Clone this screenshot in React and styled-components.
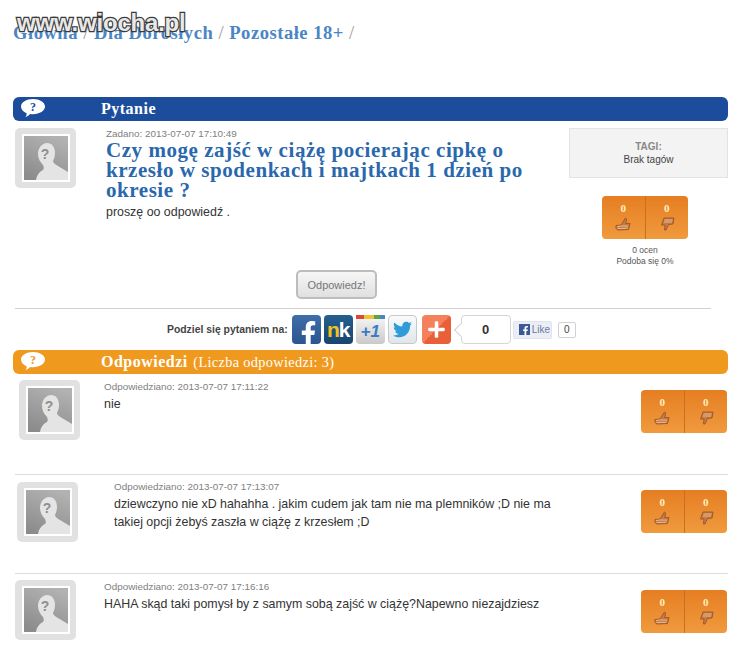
import React from "react";
import styled, { createGlobalStyle } from "styled-components";
import { FaFacebookF, FaTwitter, FaPlus } from "react-icons/fa";

const GlobalStyle = createGlobalStyle`
  html, body {
    margin: 0;
    padding: 0;
    background: #fff;
    font-family: "Liberation Sans", Arial, sans-serif;
  }
`;

function Bubble({ color }) {
  return (
    <BubbleSvg viewBox="0 0 26 20">
      <path d="M13 1c6.600 0 12 3.300 12 7.600s-5.400 7.600-12 7.600c-1 0-2 0-3-.2-1 1.200-2.600 2.600-4.600 3.200 1-1.200 1.300-2.600 1.200-4C3.300 14 1 11.500 1 8.600 1 4.300 6.400 1 13 1z" fill="#fff" />
      <text x="13" y="13" textAnchor="middle" fontSize="12" fontWeight="700" fontFamily="Liberation Serif, serif" fill={color}>?</text>
    </BubbleSvg>
  );
}

function Avatar() {
  return (
    <AvatarBox>
      <AvatarPic viewBox="0 0 44 44">
        <defs>
          <linearGradient id="avbg" x1="0.7" y1="0" x2="0.3" y2="1">
            <stop offset="0" stopColor="#b2b2b2" />
            <stop offset="1" stopColor="#8c8c8c" />
          </linearGradient>
        </defs>
        <rect width="44" height="44" fill="url(#avbg)" />
        <path d="M12 44c1-5 3-8 7-10 1-1 1-3 0-5-3-3-5-7-5-11 0-6 4-11 9-11s8 4 8 10c0 3-1 6-2 8 0 2 2 3 5 5l10 6v8z" fill="#e4e4e4" />
        <text x="21" y="23" textAnchor="middle" fontSize="14" fontWeight="700" fontFamily="Liberation Sans, sans-serif" fill="#8f8f8f">?</text>
      </AvatarPic>
    </AvatarBox>
  );
}

function ThumbUp() {
  return (
    <ThumbSvg viewBox="0 0 16 14">
      <path d="M1 8.500 6 8 10.500 1l1.200 1-1 4.500H15l-1.500 6-10 .5C1.500 13 .5 11 1 8.500z" fill="#c67a45" stroke="#8f4f25" strokeWidth="0.8" />
      <path d="M2 9.500l4-.5 7 .2M2.500 11.500l10-.2" stroke="#f2c9a0" strokeWidth="0.8" fill="none" />
    </ThumbSvg>
  );
}

function ThumbDown() {
  return (
    <ThumbSvg viewBox="0 0 16 14">
      <path d="M5 1h10l-1 6-4.500.5L7 13H5.500L6 8H2.500z" fill="#c67a45" stroke="#8f4f25" strokeWidth="0.8" />
      <path d="M5.500 3h8M5 5h8" stroke="#f2c9a0" strokeWidth="0.8" fill="none" />
    </ThumbSvg>
  );
}

function Votes() {
  return (
    <VoteBox>
      <VoteCell>
        <VoteCount>0</VoteCount>
        <ThumbUp />
      </VoteCell>
      <VoteCell>
        <VoteCount>0</VoteCount>
        <ThumbDown />
      </VoteCell>
    </VoteBox>
  );
}

const answers = [
  {
    date: "2013-07-07 17:11:22",
    text: "nie",
    indent: 24,
    left: 6,
    avatarTop: 6,
    metaTop: 7,
    voteTop: 16,
    height: 100,
  },
  {
    date: "2013-07-07 17:13:07",
    text: "dziewczyno nie xD hahahha . jakim cudem jak tam nie ma plemników ;D nie ma takiej opcji żebyś zaszła w ciążę z krzesłem ;D",
    indent: 36,
    left: 2,
    avatarTop: 7,
    metaTop: 6,
    voteTop: 15,
    height: 99,
  },
  {
    date: "2013-07-07 17:16:16",
    text: "HAHA skąd taki pomysł by z samym sobą zajść w ciążę?Napewno niezajdziesz",
    indent: 28,
    left: 0,
    avatarTop: 6,
    metaTop: 7,
    voteTop: 16,
    height: 92,
  },
];

export default function App() {
  return (
    <>
      <GlobalStyle />
      <Page>
        <Logo>www.wiocha.pl</Logo>
        <Crumbs>
          <a>Główna</a> <i>/</i> <a>Dla Dorosłych</a> <i>/</i> <a>Pozostałe 18+</a> <i>/</i>
        </Crumbs>

        <Bar $color="#1c4d9c">
          <Bubble color="#1c4d9c" />
          <BarTitle>Pytanie</BarTitle>
        </Bar>

        <Question>
          <Avatar />
          <QuestionBody>
            <Meta>Zadano: 2013-07-07 17:10:49</Meta>
            <Title>Czy mogę zajść w ciążę pocierając cipkę o krzesło w spodenkach i majtkach 1 dzień po okresie ?</Title>
            <BodyText>proszę oo odpowiedź .</BodyText>
          </QuestionBody>
          <Side>
            <Tags>
              <strong>TAGI:</strong>
              <span>Brak tagów</span>
            </Tags>
            <VoteGroup>
              <Votes />
              <Rating>
                0 ocen
                <br />
                Podoba się 0%
              </Rating>
            </VoteGroup>
          </Side>
        </Question>

        <ButtonRow>
          <AnswerButton>Odpowiedz!</AnswerButton>
        </ButtonRow>

        <ShareRow>
          <ShareLabel>Podziel się pytaniem na:</ShareLabel>
          <ShareIcon $bg="linear-gradient(#3f6ea8, #2a5590)" $fg="#fff" $size={25}>
            <FacebookMark />
          </ShareIcon>
          <ShareIcon $bg="linear-gradient(#245f8f, #17456f)" $fg="#f2c21c">
            <NkText>n<b>k</b></NkText>
          </ShareIcon>
          <ShareIcon $bg="linear-gradient(#f2f2f2, #c9c9c9)" $fg="#3b7dc4" $gplus>
            <PlusOne>+1</PlusOne>
          </ShareIcon>
          <ShareIcon $bg="linear-gradient(#fafafa, #dfe6ea)" $fg="#2f9bd8" $outlined $gap={5}>
            <FaTwitter />
          </ShareIcon>
          <ShareIcon $bg="linear-gradient(135deg, #f5805c 50%, #e85f38 50%)" $fg="#fff">
            <FaPlus />
          </ShareIcon>
          <Counter>0</Counter>
          <LikeButton>
            <LikeLogo>
              <FaFacebookF />
            </LikeLogo>
            Like
          </LikeButton>
          <LikeCount>0</LikeCount>
        </ShareRow>

        <Bar $color="#ef9a1e">
          <Bubble color="#ef9a1e" />
          <BarTitle>
            Odpowiedzi <em>(Liczba odpowiedzi: 3)</em>
          </BarTitle>
        </Bar>

        <Answers>
          {answers.map((a, i) => (
            <Answer key={a.date} $height={a.height} $first={i === 0} $left={a.left}>
              <AvatarSlot $top={a.avatarTop}>
                <Avatar />
              </AvatarSlot>
              <AnswerBody $indent={a.indent} $top={a.metaTop}>
                <Meta>Odpowiedziano: {a.date}</Meta>
                <BodyText>{a.text}</BodyText>
              </AnswerBody>
              <AnswerVotes $top={a.voteTop}>
                <Votes />
              </AnswerVotes>
            </Answer>
          ))}
        </Answers>
      </Page>
    </>
  );
}

const Page = styled.div`
  position: relative;
  width: 715px;
  height: 665px;
  padding-left: 13px;
  overflow: hidden;
`;

const Logo = styled.div`
  position: absolute;
  z-index: 2;
  left: 17px;
  top: 9px;
  font: 700 24px/28px "Liberation Sans", sans-serif;
  letter-spacing: -0.2px;
  color: #e8e8e8;
  -webkit-text-stroke: 2.4px #3a3a3a;
  paint-order: stroke fill;
`;

const Crumbs = styled.div`
  height: 97px;
  box-sizing: border-box;
  padding-top: 22px;
  font: 700 18.6px/22px "Liberation Serif", serif;
  letter-spacing: 0.5px;
  a {
    color: #4a86c5;
  }
  i {
    font-style: normal;
    font-weight: 400;
    color: #999;
  }
`;

const Bar = styled.div`
  display: flex;
  align-items: center;
  height: 24px;
  background: ${(p) => p.$color};
  border-radius: 6px;
  padding-left: 7px;
`;

const BubbleSvg = styled.svg`
  width: 26px;
  height: 20px;
  margin-top: -2px;
  flex: none;
`;

const BarTitle = styled.div`
  margin-left: 55px;
  font: 700 16px/24px "Liberation Serif", serif;
  letter-spacing: 0.5px;
  color: #fff;
  em {
    font-style: normal;
    font-weight: 400;
    font-size: 14.3px;
    letter-spacing: 0.35px;
    margin-left: 1px;
    color: #fff;
  }
`;

const AvatarBox = styled.div`
  flex: none;
  display: flex;
  align-items: center;
  justify-content: center;
  width: 61px;
  height: 60px;
  background: #e1e1e1;
  border-radius: 5px;
`;

const AvatarPic = styled.svg`
  width: 44px;
  height: 44px;
  border: 2px solid #fff;
`;

const Question = styled.div`
  display: flex;
  box-sizing: border-box;
  padding: 7px 0 0 2px;
  height: 149px;
`;

const QuestionBody = styled.div`
  width: 432px;
  margin-left: 30px;
`;

const Meta = styled.div`
  font-size: 9.9px;
  line-height: 12px;
  color: #808080;
`;

const Title = styled.h1`
  margin: 0;
  font: 700 21px/20px "Liberation Serif", serif;
  letter-spacing: 0.55px;
  color: #2a68ad;
  & + div {
    margin-top: 3px;
  }
`;

const BodyText = styled.div`
  margin-top: 2px;
  font-size: 12.4px;
  line-height: 18px;
  color: #333;
`;

const Side = styled.div`
  display: flex;
  flex-direction: column;
  width: 159px;
  margin-left: 31px;
`;

const Tags = styled.div`
  box-sizing: border-box;
  display: flex;
  flex-direction: column;
  align-items: center;
  justify-content: center;
  width: 159px;
  height: 50px;
  background: #f3f3f3;
  border: 1px solid #e3e3e3;
  font-size: 10px;
  line-height: 13px;
  color: #444;
  strong {
    color: #888;
  }
`;

const VoteGroup = styled.div`
  display: flex;
  flex-direction: column;
  align-items: center;
  width: 152px;
  margin-top: 18px;
`;

const VoteBox = styled.div`
  display: flex;
  width: 86px;
  height: 43px;
  border-radius: 4px;
  background: linear-gradient(#e67e22, #f09a3e);
`;

const VoteCell = styled.div`
  flex: 1;
  display: flex;
  flex-direction: column;
  align-items: center;
  padding-top: 6px;
  box-sizing: border-box;
  & + & {
    border-left: 1px solid #c9701f;
  }
`;

const ThumbSvg = styled.svg`
  width: 16px;
  height: 14px;
  margin-top: 2px;
`;

const VoteCount = styled.div`
  font: 700 11px/13px "Liberation Serif", serif;
  color: #ffeec0;
`;

const Rating = styled.div`
  margin-top: 6px;
  text-align: center;
  font-size: 8.5px;
  line-height: 11px;
  color: #555;
`;

const ButtonRow = styled.div`
  box-sizing: border-box;
  height: 39px;
  width: 696px;
  margin-left: 2px;
  padding-left: 281px;
  border-bottom: 1px solid #d0d0d0;
`;

const AnswerButton = styled.button`
  display: block;
  box-sizing: border-box;
  width: 81px;
  height: 29px;
  background: linear-gradient(#f6f6f6, #e0e0e0);
  border: 2px solid #bdbdbd;
  border-radius: 5px;
  font: 400 11px "Liberation Sans", sans-serif;
  color: #777;
`;

const ShareRow = styled.div`
  display: flex;
  align-items: center;
  height: 41px;
  padding-left: 154px;
  box-sizing: border-box;
`;

const ShareLabel = styled.div`
  font-size: 10.4px;
  font-weight: 700;
  color: #444;
  margin-right: 4px;
`;

const ShareIcon = styled.div`
  box-sizing: border-box;
  display: flex;
  align-items: center;
  justify-content: center;
  flex: none;
  width: 29px;
  height: 29px;
  margin-right: ${(p) => p.$gap || 3}px;
  overflow: hidden;
  border-radius: 4px;
  background: ${(p) => p.$bg};
  color: ${(p) => p.$fg};
  font-size: ${(p) => p.$size || 19}px;
  ${(p) => p.$outlined && "border: 1px solid #c8c8c8;"}
  ${(p) =>
    p.$gplus &&
    `border-top: 4px solid;
     border-image: linear-gradient(90deg, #d9483b 0 30%, #f1c232 30% 60%, #5aa845 60% 80%, #4a86c5 80%) 1;`}
`;

const FacebookMark = styled(FaFacebookF)`
  margin: 8px 0 0 4px;
`;

const NkText = styled.span`
  font: 700 21px/29px "Liberation Sans", sans-serif;
  letter-spacing: -1px;
  b {
    color: #fff;
  }
`;

const PlusOne = styled.span`
  font: italic 700 17px/22px "Liberation Sans", sans-serif;
`;

const Counter = styled.div`
  position: relative;
  box-sizing: border-box;
  flex: none;
  width: 50px;
  height: 29px;
  margin-left: 7px;
  margin-right: 2px;
  border: 1px solid #d4d4d4;
  border-radius: 4px;
  text-align: center;
  font-size: 13px;
  font-weight: 700;
  line-height: 27px;
  color: #333;
  &::before {
    content: "";
    position: absolute;
    left: -6px;
    top: 9px;
    width: 9px;
    height: 9px;
    background: #fff;
    border-left: 1px solid #d4d4d4;
    border-bottom: 1px solid #d4d4d4;
    transform: rotate(45deg);
  }
`;

const LikeButton = styled.div`
  display: flex;
  align-items: center;
  gap: 2px;
  box-sizing: border-box;
  flex: none;
  width: 39px;
  height: 18px;
  padding-left: 5px;
  background: #eceef5;
  border: 1px solid #dfe4f0;
  border-radius: 2px;
  font-size: 10px;
  color: #6a7ba0;
`;

const LikeLogo = styled.span`
  display: flex;
  align-items: flex-end;
  justify-content: flex-end;
  width: 11px;
  height: 11px;
  background: #3b5998;
  color: #fff;
  font-size: 9px;
`;

const LikeCount = styled.div`
  position: relative;
  box-sizing: border-box;
  flex: none;
  width: 18px;
  height: 16px;
  margin-left: 6px;
  border: 1px solid #d1d1d1;
  border-radius: 2px;
  text-align: center;
  font-size: 10px;
  line-height: 14px;
  color: #444;
`;

const Answers = styled.div`
  display: flex;
  flex-direction: column;
`;

const Answer = styled.div`
  display: flex;
  box-sizing: border-box;
  height: ${(p) => p.$height}px;
  padding-left: ${(p) => p.$left}px;
  margin-left: ${(p) => (p.$first ? 0 : 2)}px;
  border-top: ${(p) => (p.$first ? "none" : "1px solid #dcdcdc")};
`;

const AvatarSlot = styled.div`
  padding-top: ${(p) => p.$top}px;
`;

const AnswerBody = styled.div`
  width: 450px;
  margin-left: ${(p) => p.$indent}px;
  padding-top: ${(p) => p.$top}px;
`;

const AnswerVotes = styled.div`
  margin-left: auto;
  padding-top: ${(p) => p.$top}px;
  padding-right: 1px;
`;
